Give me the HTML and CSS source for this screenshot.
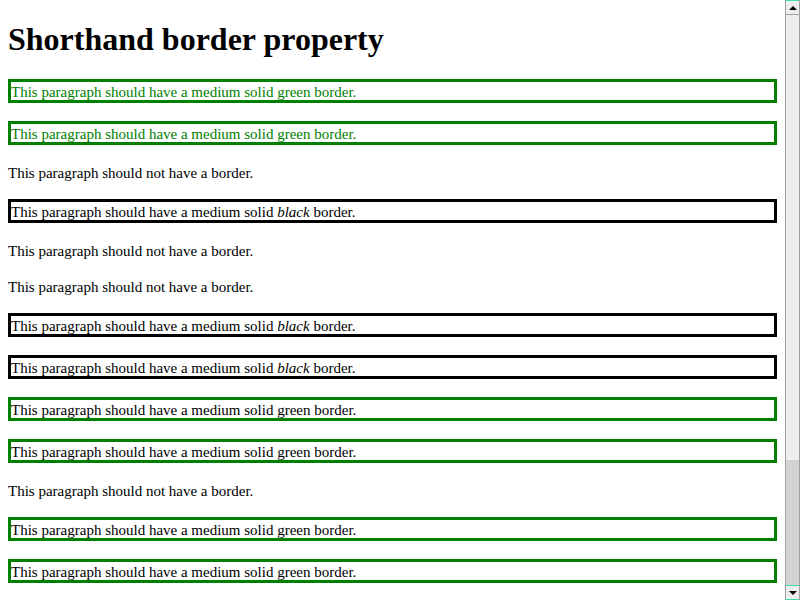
FILE: index.html
```html
<!DOCTYPE html>
<html>
<head>
<meta charset="utf-8">
<title>Shorthand border property</title>
<link rel="stylesheet" href="styles.css">
</head>
<body>
<div class="page">
<h1 class="title">Shorthand border property</h1>
<p class="para green-border green-text">This paragraph should have a medium solid green border.</p>
<p class="para green-border green-text">This paragraph should have a medium solid green border.</p>
<p class="para">This paragraph should not have a border.</p>
<p class="para black-border">This paragraph should have a medium solid <em>black</em> border.</p>
<p class="para">This paragraph should not have a border.</p>
<p class="para">This paragraph should not have a border.</p>
<p class="para black-border">This paragraph should have a medium solid <em>black</em> border.</p>
<p class="para black-border">This paragraph should have a medium solid <em>black</em> border.</p>
<p class="para green-border">This paragraph should have a medium solid green border.</p>
<p class="para green-border">This paragraph should have a medium solid green border.</p>
<p class="para">This paragraph should not have a border.</p>
<p class="para green-border">This paragraph should have a medium solid green border.</p>
<p class="para green-border">This paragraph should have a medium solid green border.</p>
</div>
<div class="scrollbar">
  <div class="sb-btn sb-up"><span class="arrow-up"></span></div>
  <div class="sb-thumb"></div>
  <div class="sb-track"></div>
  <div class="sb-btn sb-down"><span class="arrow-down"></span></div>
</div>
</body>
</html>
```

FILE: styles.css
```css
html, body {
  height: 100%;
  overflow: hidden;
}
html {
  background: #ffffff;
}
body {
  margin: 0;
  display: flex;
  font-family: "Liberation Serif", "Times New Roman", serif;
  color: #000000;
}
.page {
  flex: 1;
  min-width: 0;
  padding: 8px;
  overflow: hidden;
}
.title {
  font-size: 32px;
  font-weight: bold;
  line-height: 37px;
  margin: 13px 0 21px;
}
.para {
  margin: 18px 0;
  font-size: 15px;
  line-height: 18px;
  padding-top: 1px;
  height: 17px;
}
.green-border {
  border: 3px solid #008000;
}
.green-text {
  color: #008000;
}
.black-border {
  border: 3px solid #000000;
}

/* scrollbar chrome */
.scrollbar {
  width: 15px;
  flex: 0 0 15px;
  display: flex;
  flex-direction: column;
  box-sizing: border-box;
  border-left: 1px solid #a0a0a0;
  border-right: 1px solid #a0a0a0;
  background: #eeeeee;
}
.sb-btn {
  height: 15px;
  flex: 0 0 15px;
  box-sizing: border-box;
  display: flex;
  align-items: center;
  justify-content: center;
  background: #eeeeee;
}
.sb-up {
  border-top: 1px solid #40e0a0;
  border-bottom: 1px solid #a0a0a0;
}
.sb-down {
  border-top: 1px solid #40e0a0;
  border-bottom: 1px solid #40e0a0;
}
.sb-thumb {
  height: 445px;
  flex: 0 0 445px;
  background: #eeeeee;
}
.sb-track {
  flex: 1;
  background: #d3d3d3;
}
.arrow-up {
  width: 0;
  height: 0;
  border-left: 4px solid transparent;
  border-right: 4px solid transparent;
  border-bottom: 4px solid #000000;
}
.arrow-down {
  width: 0;
  height: 0;
  border-left: 4px solid transparent;
  border-right: 4px solid transparent;
  border-top: 4px solid #000000;
}
```
